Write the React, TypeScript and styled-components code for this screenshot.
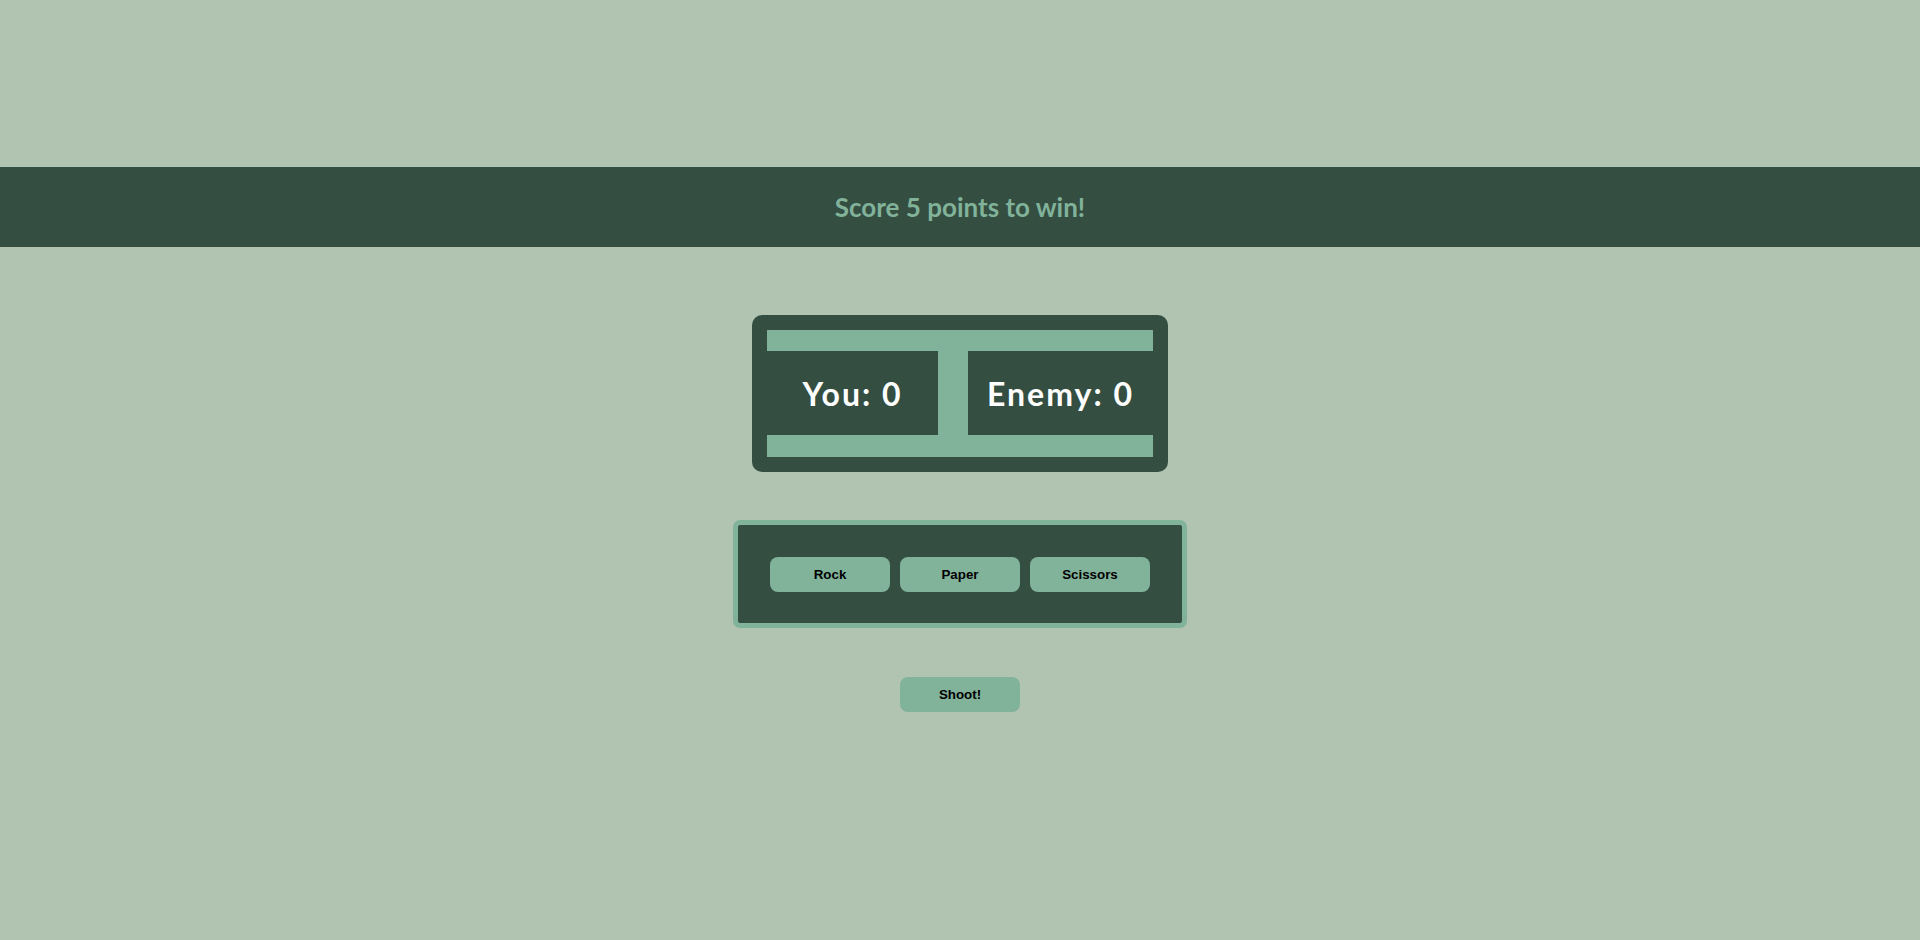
import React from "react";
import styled, { createGlobalStyle } from "styled-components";

const GlobalStyle = createGlobalStyle`
  html, body {
    margin: 0;
    padding: 0;
    background: #b0c4b1;
  }
  body {
    font-family: "Liberation Sans", Arial, sans-serif;
  }
`;

const Page = styled.div`
  min-height: 940px;
  padding-top: 167px;
  box-sizing: border-box;
  display: flex;
  flex-direction: column;
  align-items: center;
`;

const Banner = styled.header`
  align-self: stretch;
  height: 80px;
  background: #344e41;
  display: flex;
  align-items: center;
  justify-content: center;
`;

const BannerText = styled.h1`
  margin: 0;
  font-family: "Comic Sans MS", "Lato", sans-serif;
  font-size: 26px;
  font-weight: 700;
  color: #81b29a;
`;

const Scoreboard = styled.section`
  margin-top: 68px;
  width: 416px;
  box-sizing: border-box;
  padding: 15px;
  background: #344e41;
  border-radius: 10px;
`;

const ScoreInner = styled.div`
  background: #81b29a;
  padding: 21px 0 22px;
  display: flex;
  justify-content: space-between;
`;

const ScoreBox = styled.div<{ $w: number }>`
  width: ${(p) => p.$w}px;
  height: 84px;
  background: #344e41;
  display: flex;
  align-items: center;
  justify-content: center;
  color: #ffffff;
  font-family: "Comic Sans MS", "Lato", sans-serif;
  font-size: 32px;
  font-weight: 700;
  letter-spacing: 2px;
`;

const ChoicePanel = styled.section`
  margin-top: 48px;
  background: #344e41;
  border: 5px solid #81b29a;
  border-radius: 7px;
  padding: 32px 32px 31px;
  display: flex;
  gap: 10px;
`;

const GameButton = styled.button`
  width: 120px;
  height: 35px;
  border: none;
  border-radius: 8px;
  background: #81b29a;
  color: #000;
  font-family: "Liberation Sans", Arial, sans-serif;
  font-size: 13.33px;
  font-weight: 700;
  cursor: pointer;
  padding: 0;
`;

const ShootRow = styled.div`
  margin-top: 49px;
`;

export default function App() {
  return (
    <>
      <GlobalStyle />
      <Page>
        <Banner>
          <BannerText>Score 5 points to win!</BannerText>
        </Banner>
        <Scoreboard>
          <ScoreInner>
            <ScoreBox $w={171}>You: 0</ScoreBox>
            <ScoreBox $w={185}>Enemy: 0</ScoreBox>
          </ScoreInner>
        </Scoreboard>
        <ChoicePanel>
          <GameButton>Rock</GameButton>
          <GameButton>Paper</GameButton>
          <GameButton>Scissors</GameButton>
        </ChoicePanel>
        <ShootRow>
          <GameButton>Shoot!</GameButton>
        </ShootRow>
      </Page>
    </>
  );
}
